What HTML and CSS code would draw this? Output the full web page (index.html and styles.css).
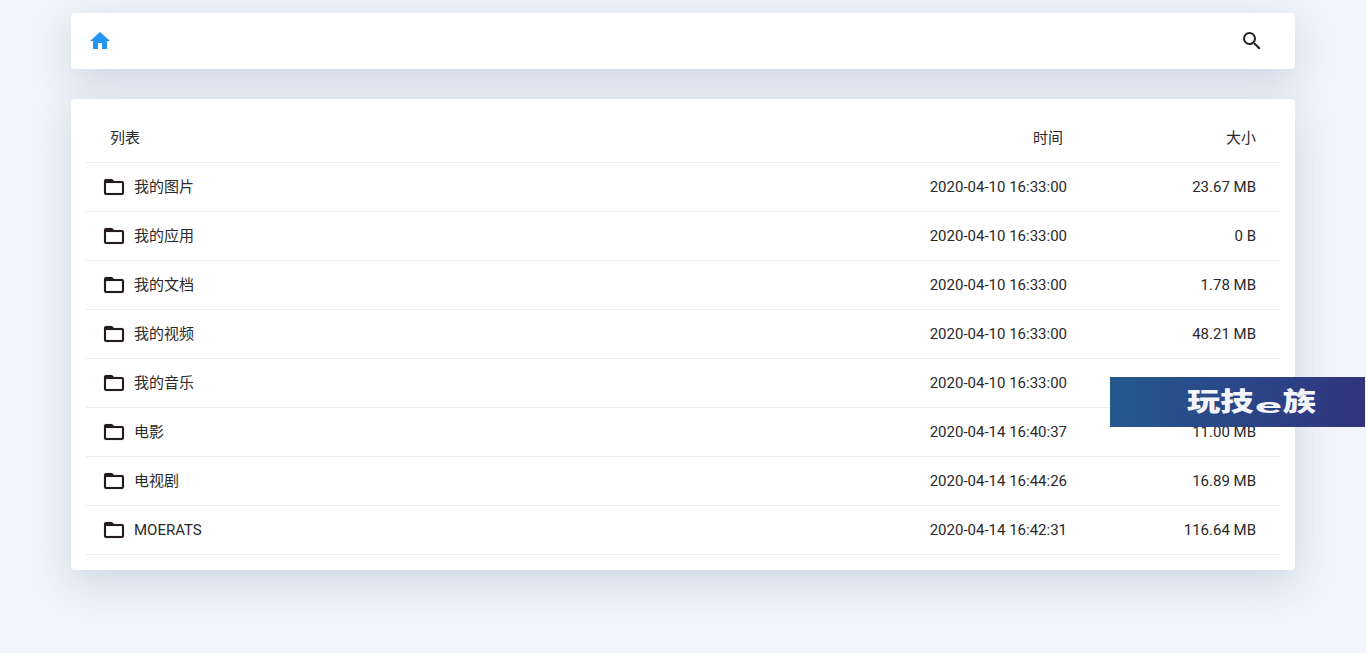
FILE: index.html
```html
<!DOCTYPE html>
<html lang="zh">
<head>
<meta charset="utf-8">
<title>列表</title>
<link rel="stylesheet" href="styles.css">
</head>
<body>
<div class="wrap">
  <header class="card nav">
    <svg class="home" viewBox="0 0 24 24"><path d="M10 20v-6h4v6h5v-8h3L12 3 2 12h3v8z"/></svg>
    <svg class="search" viewBox="0 0 24 24"><path d="M15.5 14h-.79l-.28-.27A6.47 6.47 0 0 0 16 9.5 6.5 6.5 0 1 0 9.5 16c1.61 0 3.09-.59 4.23-1.57l.27.28v.79l5 4.99L20.49 19l-4.99-5zm-6 0C7.01 14 5 11.99 5 9.5S7.01 5 9.5 5 14 7.01 14 9.5 11.99 14 9.5 14z"/></svg>
  </header>
  <main class="card list">
    <div class="row head"><span class="name">列表</span><span class="time">时间</span><span class="size">大小</span></div>
    <div class="row"><span class="name"><svg class="folder" viewBox="0 0 24 24"><path d="M10 4H4c-1.1 0-2 .9-2 2v12c0 1.1.9 2 2 2h16c1.1 0 2-.9 2-2V8c0-1.1-.9-2-2-2h-8l-2-2zm10 14H4V8h16v10z"/></svg>我的图片</span><span class="time">2020-04-10 16:33:00</span><span class="size">23.67 MB</span></div>
    <div class="row"><span class="name"><svg class="folder" viewBox="0 0 24 24"><path d="M10 4H4c-1.1 0-2 .9-2 2v12c0 1.1.9 2 2 2h16c1.1 0 2-.9 2-2V8c0-1.1-.9-2-2-2h-8l-2-2zm10 14H4V8h16v10z"/></svg>我的应用</span><span class="time">2020-04-10 16:33:00</span><span class="size">0 B</span></div>
    <div class="row"><span class="name"><svg class="folder" viewBox="0 0 24 24"><path d="M10 4H4c-1.1 0-2 .9-2 2v12c0 1.1.9 2 2 2h16c1.1 0 2-.9 2-2V8c0-1.1-.9-2-2-2h-8l-2-2zm10 14H4V8h16v10z"/></svg>我的文档</span><span class="time">2020-04-10 16:33:00</span><span class="size">1.78 MB</span></div>
    <div class="row"><span class="name"><svg class="folder" viewBox="0 0 24 24"><path d="M10 4H4c-1.1 0-2 .9-2 2v12c0 1.1.9 2 2 2h16c1.1 0 2-.9 2-2V8c0-1.1-.9-2-2-2h-8l-2-2zm10 14H4V8h16v10z"/></svg>我的视频</span><span class="time">2020-04-10 16:33:00</span><span class="size">48.21 MB</span></div>
    <div class="row"><span class="name"><svg class="folder" viewBox="0 0 24 24"><path d="M10 4H4c-1.1 0-2 .9-2 2v12c0 1.1.9 2 2 2h16c1.1 0 2-.9 2-2V8c0-1.1-.9-2-2-2h-8l-2-2zm10 14H4V8h16v10z"/></svg>我的音乐</span><span class="time">2020-04-10 16:33:00</span><span class="size"></span></div>
    <div class="row"><span class="name"><svg class="folder" viewBox="0 0 24 24"><path d="M10 4H4c-1.1 0-2 .9-2 2v12c0 1.1.9 2 2 2h16c1.1 0 2-.9 2-2V8c0-1.1-.9-2-2-2h-8l-2-2zm10 14H4V8h16v10z"/></svg>电影</span><span class="time">2020-04-14 16:40:37</span><span class="size">11.00 MB</span></div>
    <div class="row"><span class="name"><svg class="folder" viewBox="0 0 24 24"><path d="M10 4H4c-1.1 0-2 .9-2 2v12c0 1.1.9 2 2 2h16c1.1 0 2-.9 2-2V8c0-1.1-.9-2-2-2h-8l-2-2zm10 14H4V8h16v10z"/></svg>电视剧</span><span class="time">2020-04-14 16:44:26</span><span class="size">16.89 MB</span></div>
    <div class="row"><span class="name"><svg class="folder" viewBox="0 0 24 24"><path d="M10 4H4c-1.1 0-2 .9-2 2v12c0 1.1.9 2 2 2h16c1.1 0 2-.9 2-2V8c0-1.1-.9-2-2-2h-8l-2-2zm10 14H4V8h16v10z"/></svg>MOERATS</span><span class="time">2020-04-14 16:42:31</span><span class="size">116.64 MB</span></div>
  </main>
</div>
<aside class="banner"><span class="brand">玩技<em>e</em>族</span></aside>
</body>
</html>
```
FILE: styles.css
```css
* { box-sizing: border-box; }
html, body { height: 100%; }
body {
  margin: 0;
  background: #f2f5fa;
  color: #2a2a2a;
  font: 15px/20px Roboto, "Noto Sans CJK SC", sans-serif;
  overflow: hidden;
}
.wrap {
  width: 1224px;
  margin-left: 71px;
  padding-top: 13px;
  display: flex;
  flex-direction: column;
  gap: 30px;
}
.card {
  background: #fff;
  border-radius: 4px;
  box-shadow: 0 12px 42px rgba(125, 145, 180, .32);
}
.nav {
  height: 56px;
  display: flex;
  align-items: center;
  justify-content: space-between;
  padding: 0 31px 0 17px;
}
.home { width: 24px; height: 24px; fill: #2196f3; }
.search { width: 24px; height: 24px; fill: #212121; }
.list { padding: 15px; }
.row {
  height: 49px;
  display: flex;
  align-items: center;
  border-bottom: 1px solid #ebedf0;
  padding: 0 24px 0 16px;
}
.head { padding-left: 24px; }
.name {
  flex: 1;
  display: flex;
  align-items: center;
}
.time { text-align: right; width: 300px; }
.size { text-align: right; width: 189px; }
.head .time { padding-right: 4px; }
.folder { width: 24px; height: 24px; margin-right: 8px; fill: #241c1e; stroke: #241c1e; stroke-width: .12; }
.banner {
  position: absolute;
  left: 1110px;
  top: 377px;
  width: 255px;
  height: 50px;
  background: linear-gradient(100deg, #24598f 0%, #2d3f84 70%, #31327e 100%);
  display: flex;
  align-items: center;
  padding-left: 77px;
}
.brand {
  display: inline-block;
  color: #f4f5fa;
  font-size: 26px;
  line-height: 1;
  font-weight: 900;
  transform: scaleX(1.28);
  transform-origin: left center;
}
.brand em {
  display: inline-block;
  font-style: normal;
  font-size: 20px;
  font-weight: 700;
  margin: 0 6px;
  vertical-align: -2px;
  transform: scaleX(1.95);
}
```
